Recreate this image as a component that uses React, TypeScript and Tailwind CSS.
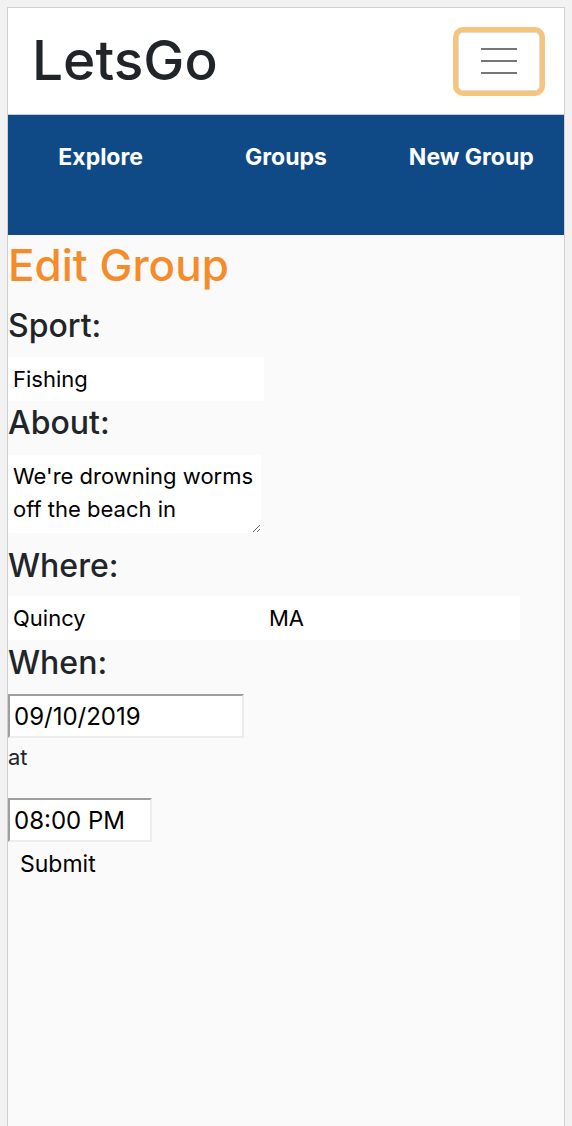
import React from 'react';

const NavLink: React.FC<{ label: string }> = ({ label }) => (
  <a href="#" className="text-center text-[23px] leading-[30px] font-bold text-white no-underline">
    {label}
  </a>
);

const Label: React.FC<{ text: string; className?: string }> = ({ text, className }) => (
  <h3 className={`text-[32px] leading-[40px] font-medium text-[#212529] ${className ?? ''}`}>{text}</h3>
);

const App: React.FC = () => {
  return (
    <div className="min-h-screen bg-[#f2f2f2] px-[7px] pt-[7px]" style={{ fontFamily: 'Inter, "Liberation Sans", sans-serif' }}>
      <div className="min-h-[1119px] border border-b-0 border-[#d0d0d0] bg-[#fafafa]">
        <header className="flex h-[107px] items-center justify-between border-b border-[#c9cdd2] bg-white pl-[24px] pr-[24px]">
          <a href="#" className="mb-[2px] text-[55px] leading-[66px] font-medium text-[#212529] no-underline">
            LetsGo
          </a>
          <button className="flex h-[59px] w-[82px] flex-col items-center justify-center gap-[10px] rounded-[5px] border border-[#dcdcdc] bg-white ring-[5px] ring-[#f6c47c]">
            <span className="block h-[2px] w-[36px] bg-[#777777]" />
            <span className="block h-[2px] w-[36px] bg-[#777777]" />
            <span className="block h-[2px] w-[36px] bg-[#777777]" />
          </button>
        </header>

        <nav className="grid h-[120px] grid-cols-3 bg-[#0f4a87] pt-[27px]">
          <NavLink label="Explore" />
          <NavLink label="Groups" />
          <NavLink label="New Group" />
        </nav>

        <form className="flex flex-col items-start">
          <h1 className="mt-[2px] text-[44px] leading-[56px] font-medium text-[#f68b29]">Edit Group</h1>

          <Label text="Sport:" className="mt-[13px]" />
          <input
            readOnly
            value="Fishing"
            className="mt-[11px] h-[44px] w-[256px] bg-white pl-[5px] text-[22px] text-black outline-none"
          />

          <Label text="About:" className="mt-[2px]" />
          <textarea
            readOnly
            value={"We're drowning worms off the beach in\nQuincy this Tuesday night, bring your own bait."}
            className="mt-[12px] h-[78px] w-[253px] bg-white px-[5px] pt-[5px] text-[22px] leading-[33px] text-black outline-none"
          />

          <Label text="Where:" className="mt-[13px]" />
          <div className="mt-[10px] flex">
            <input
              readOnly
              value="Quincy"
              className="h-[44px] w-[256px] bg-white pl-[5px] text-[22px] text-black outline-none"
            />
            <input
              readOnly
              value="MA"
              className="h-[44px] w-[256px] bg-white pl-[5px] text-[22px] text-black outline-none"
            />
          </div>

          <Label text="When:" className="mt-[3px]" />
          <input
            readOnly
            value="09/10/2019"
            className="mt-[11px] h-[44px] w-[236px] border-2 border-t-[#9e9e9e] border-r-[#ececec] border-b-[#ececec] border-l-[#9e9e9e] bg-white pl-[4px] text-[24px] text-black outline-none"
          />

          <span className="mt-[5px] text-[22px] leading-[28px] text-[#212529]">at</span>

          <input
            readOnly
            value="08:00 PM"
            className="mt-[27px] h-[44px] w-[144px] border-2 border-t-[#9e9e9e] border-r-[#ececec] border-b-[#ececec] border-l-[#9e9e9e] bg-white pl-[4px] text-[24px] text-black outline-none"
          />

          <button type="button" className="mt-[8px] bg-transparent px-[12px] text-[23px] leading-[28px] text-black">
            Submit
          </button>
        </form>
      </div>
    </div>
  );
};

export default App;
